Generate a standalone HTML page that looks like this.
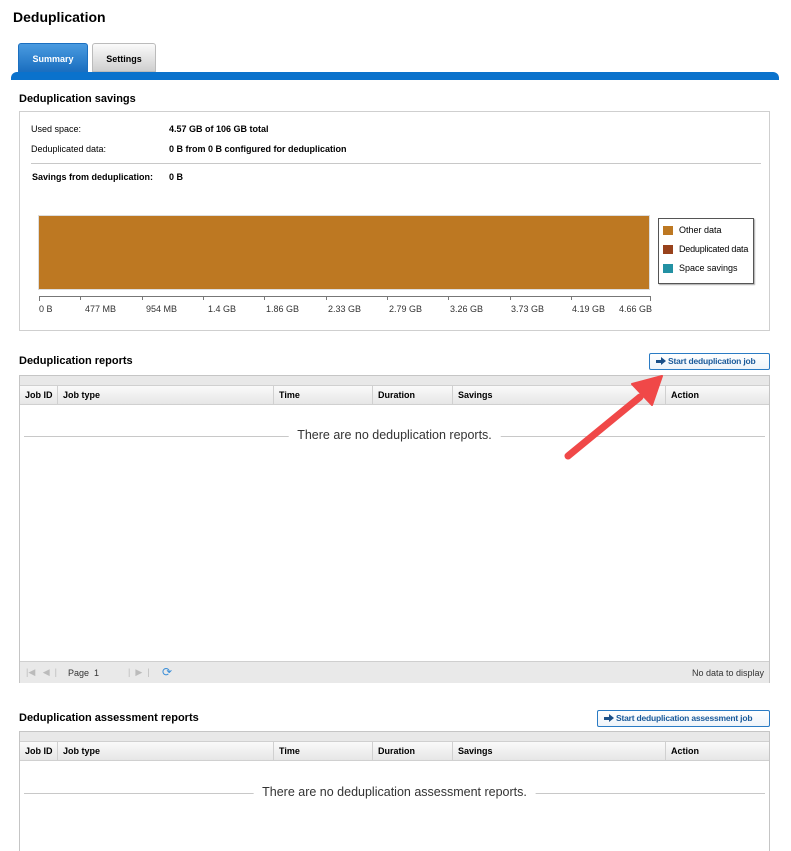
<!DOCTYPE html>
<html><head><meta charset="utf-8"><style>
*{box-sizing:border-box;margin:0;padding:0}
body{width:791px;height:838px;background:#fff;font-family:"Liberation Sans",Arial,sans-serif;color:#000;position:relative;overflow:hidden;font-size:9px}
.a{position:absolute;white-space:nowrap}
.b{font-weight:bold}
h1{position:absolute;left:13px;top:9px;font-size:14px;font-weight:bold}
.tab{position:absolute;top:43px;height:29px;border-radius:3px 3px 0 0;font-weight:bold;font-size:9px;text-align:center;line-height:30px}
.sec{position:absolute;left:19px;font-size:11px;font-weight:bold}
.btn{position:absolute;height:17px;border:1px solid #2a7bc4;border-radius:2px;background:linear-gradient(#fff,#eef4fa);color:#1a5a9a;font-weight:bold;font-size:8.5px;letter-spacing:-0.2px;line-height:15px;padding-left:18px;white-space:nowrap;overflow:hidden}
.btn:before{content:"";position:absolute;left:6px;top:6px;width:7px;height:3px;background:#1a4f88}
.btn:after{content:"";position:absolute;left:11px;top:3px;border-left:5px solid #1a4f88;border-top:4.5px solid transparent;border-bottom:4.5px solid transparent}
.grid{position:absolute;left:19px;width:751px;border:1px solid #c5c5c5;border-bottom:none}
.gtop{height:10px;background:#e8e8e8;border-bottom:1px solid #d0d0d0}
.ghead{height:19px;background:linear-gradient(#fafafa,#e6e6e6);position:relative;border-bottom:1px solid #d0d0d0}
.ghead div{position:absolute;top:0;height:19px;line-height:19px;padding-left:5px;font-weight:bold;border-right:1px solid #d0d0d0}
.empty{position:absolute;left:4px;right:4px;height:1px;background:#c8c8c8}
.empty span{position:absolute;left:50%;transform:translateX(-50%);top:-8px;background:#fff;padding:0 9px;font-size:12.5px;color:#333}
</style></head><body>
<h1>Deduplication</h1>
<div class="tab" style="left:18px;width:70px;background:linear-gradient(#4a9be0,#1b6fc0);color:#fff;border:1px solid #1b6fc0">Summary</div>
<div class="tab" style="left:92px;width:64px;background:linear-gradient(#fafafa,#cfcfcf);border:1px solid #bbb">Settings</div>
<div class="a" style="left:11px;top:72px;width:768px;height:8px;background:#0a72cc;border-radius:6px 6px 0 0"></div>

<div class="sec" style="top:93px">Deduplication savings</div>
<div class="a" style="left:19px;top:111px;width:751px;height:220px;border:1px solid #cfcfcf"></div>
<div class="a" style="left:31px;top:124px">Used space:</div>
<div class="a b" style="left:169px;top:124px">4.57 GB of 106 GB total</div>
<div class="a" style="left:31px;top:144px">Deduplicated data:</div>
<div class="a b" style="left:169px;top:144px">0 B from 0 B configured for deduplication</div>
<div class="a" style="left:31px;top:163px;width:730px;height:1px;background:#c8c8c8"></div>
<div class="a b" style="left:32px;top:172px">Savings from deduplication:</div>
<div class="a b" style="left:169px;top:172px">0 B</div>
<div class="a" style="left:38px;top:215px;width:612px;height:75px;background:#bd7822;border:1px solid #ddd"></div>
<div class="a" style="left:39px;top:296px;width:612px;height:1px;background:#777"></div>
<svg class="a" style="left:0;top:296px" width="791" height="6"><g stroke="#777" stroke-width="1">
<path d="M39.5 0v5M80.5 0v4M142.5 0v4M203.5 0v4M264.5 0v4M326.5 0v4M387.5 0v4M448.5 0v4M510.5 0v4M571.5 0v4M650.5 0v5"/></g></svg>
<div class="a" style="left:39px;top:304px;color:#333">0 B</div>
<div class="a" style="left:85px;top:304px;color:#333">477 MB</div>
<div class="a" style="left:146px;top:304px;color:#333">954 MB</div>
<div class="a" style="left:208px;top:304px;color:#333">1.4 GB</div>
<div class="a" style="left:266px;top:304px;color:#333">1.86 GB</div>
<div class="a" style="left:328px;top:304px;color:#333">2.33 GB</div>
<div class="a" style="left:389px;top:304px;color:#333">2.79 GB</div>
<div class="a" style="left:450px;top:304px;color:#333">3.26 GB</div>
<div class="a" style="left:511px;top:304px;color:#333">3.73 GB</div>
<div class="a" style="left:572px;top:304px;color:#333">4.19 GB</div>
<div class="a" style="left:619px;top:304px;color:#333">4.66 GB</div>
<div class="a" style="left:658px;top:218px;width:96px;height:66px;border:1px solid #555;box-shadow:1px 1px 1px #aaa"></div>
<div class="a" style="left:663px;top:226px;width:10px;height:9px;background:#bd7822"></div>
<div class="a" style="left:679px;top:225px">Other data</div>
<div class="a" style="left:663px;top:245px;width:10px;height:9px;background:#98421c"></div>
<div class="a" style="left:679px;top:244px;letter-spacing:-0.2px">Deduplicated data</div>
<div class="a" style="left:663px;top:264px;width:10px;height:9px;background:#2391a3"></div>
<div class="a" style="left:679px;top:263px">Space savings</div>

<div class="sec" style="top:355px">Deduplication reports</div>
<div class="btn" style="left:649px;top:353px;width:121px">Start deduplication job</div>
<div class="grid" style="top:375px;height:308px">
<div class="gtop"></div>
<div class="ghead"><div style="left:0;width:38px">Job ID</div><div style="left:38px;width:216px">Job type</div><div style="left:254px;width:99px">Time</div><div style="left:353px;width:80px">Duration</div><div style="left:433px;width:213px">Savings</div><div style="left:646px;width:104px;border:none">Action</div></div>
<div class="empty" style="top:60px"><span>There are no deduplication reports.</span></div>
<div class="a" style="left:0;top:285px;width:749px;height:22px;background:#e9e9e9;border-top:1px solid #cfcfcf">
<span class="a" style="left:6px;top:5px;color:#bbb">|◀ &nbsp; ◀ &nbsp;|</span>
<span class="a" style="left:48px;top:6px;color:#333">Page &nbsp;1</span>
<span class="a" style="left:108px;top:5px;color:#bbb">| &nbsp;▶ &nbsp;|</span>
<span class="a" style="left:142px;top:3px;color:#3a8ed8;font-size:12px">⟳</span>
<span class="a" style="right:5px;top:6px;color:#333">No data to display</span></div>
</div>

<div class="sec" style="top:712px">Deduplication assessment reports</div>
<div class="btn" style="left:597px;top:710px;width:173px">Start deduplication assessment job</div>
<div class="grid" style="top:731px;height:120px">
<div class="gtop"></div>
<div class="ghead"><div style="left:0;width:38px">Job ID</div><div style="left:38px;width:216px">Job type</div><div style="left:254px;width:99px">Time</div><div style="left:353px;width:80px">Duration</div><div style="left:433px;width:213px">Savings</div><div style="left:646px;width:104px;border:none">Action</div></div>
<div class="empty" style="top:61px"><span>There are no deduplication assessment reports.</span></div>
</div>

<svg class="a" style="left:0;top:0" width="791" height="838">
<line x1="568" y1="456" x2="640" y2="397" stroke="#f04848" stroke-width="7" stroke-linecap="round"/>
<polygon points="662,376 632,384 652,405" fill="#f04848" stroke="#f04848" stroke-width="2" stroke-linejoin="round"/>
</svg>
</body></html>
